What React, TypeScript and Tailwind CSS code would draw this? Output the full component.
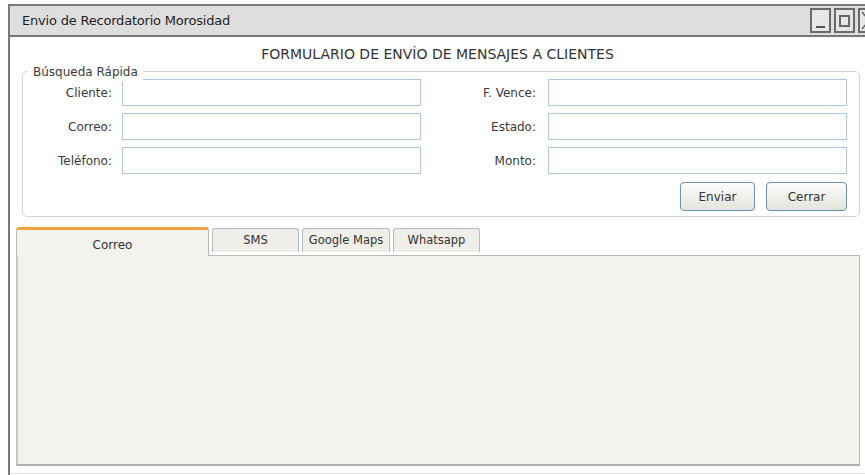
import React from "react";

const baseFont = { fontFamily: '"DejaVu Sans", "Noto Sans", sans-serif' };

function Field({ label, labelW, gap }: { label: string; labelW: string; gap: string }) {
  return (
    <div className="flex items-center">
      <div className={`${labelW} text-right text-[12px] text-[#3a3a3a]`}>{label}</div>
      <div className={`${gap} h-[27px] w-[299px] border border-[#b2c7dc] bg-white`} />
    </div>
  );
}

function WinButton({ children }: { children: React.ReactNode }) {
  return (
    <div className="flex h-[25px] w-[21px] items-center justify-center border-2 border-[#6a6a6a] bg-[#e6e6e6]">
      {children}
    </div>
  );
}

export default function App() {
  const tabs = [
    { t: "SMS", w: "w-[87px]" },
    { t: "Google Maps", w: "w-[88px]" },
    { t: "Whatsapp", w: "w-[87px]" },
  ];
  return (
    <div className="h-[475px] w-[865px] overflow-hidden bg-white pl-[8px] pt-[4px]" style={baseFont}>
      <div className="flex h-[471px] flex-col border-l-2 border-t-2 border-[#7a7a7a]">
        {/* title bar */}
        <div className="flex h-[31px] shrink-0 items-center justify-between border-b-2 border-[#777] bg-[#dedede] pl-[12px]">
          <span className="text-[13px] tracking-[-0.2px] text-[#1e1e1e]">Envio de Recordatorio Morosidad</span>
          <div className="-mr-[14px] flex gap-[3px]">
            <WinButton>
              <div className="mt-[12px] h-[2px] w-[9px] bg-[#555]" />
            </WinButton>
            <WinButton>
              <div className="h-[12px] w-[11px] border-2 border-[#666]" />
            </WinButton>
            <WinButton>
              <svg width="16" height="19" viewBox="0 0 16 19">
                <path d="M1 1 L15 18 M15 1 L1 18" stroke="#666" strokeWidth="1.5" fill="none" />
              </svg>
            </WinButton>
          </div>
        </div>

        {/* heading */}
        <div className="mt-[7px] h-[19px] text-center text-[14px] text-[#333]">
          FORMULARIO DE ENVÍO DE MENSAJES A CLIENTES
        </div>

        {/* quick search group */}
        <div className="relative ml-[12px] mr-[5px] mt-[8px] h-[146px] rounded-[5px] border border-[#d6d6ce] pt-[7px]">
          <div className="absolute -top-[9px] left-[5px] bg-white px-[5px] text-[12px] text-[#3a3a3a]">
            Búsqueda Rápida
          </div>
          <div className="flex flex-col gap-[7px]">
            <div className="flex">
              <Field label="Cliente:" labelW="w-[89px]" gap="ml-[10px]" />
              <Field label="F. Vence:" labelW="w-[115px]" gap="ml-[12px]" />
            </div>
            <div className="flex">
              <Field label="Correo:" labelW="w-[89px]" gap="ml-[10px]" />
              <Field label="Estado:" labelW="w-[115px]" gap="ml-[12px]" />
            </div>
            <div className="flex">
              <Field label="Teléfono:" labelW="w-[89px]" gap="ml-[10px]" />
              <Field label="Monto:" labelW="w-[115px]" gap="ml-[12px]" />
            </div>
          </div>
          <div className="mt-[8px] flex justify-end gap-[11px] pr-[12px]">
            <button className="h-[29px] w-[75px] rounded-[4px] border border-[#6f8fae] bg-gradient-to-b from-[#fbfbfa] to-[#e4e4de] text-[12px] text-[#333]">
              Enviar
            </button>
            <button className="h-[29px] w-[81px] rounded-[4px] border border-[#6f8fae] bg-gradient-to-b from-[#fbfbfa] to-[#e4e4de] text-[12px] text-[#333]">
              Cerrar
            </button>
          </div>
        </div>

        {/* tabs */}
        <div className="ml-[6px] mr-[5px] mt-[10px] flex flex-col">
          <div className="relative z-10 flex items-start">
            <div className="-mb-px flex h-[29px] w-[193px] items-center justify-center rounded-t-[3px] border-l border-r border-t-[3px] border-[#b9b9b4] border-t-[#f0a33c] bg-[#f3f2ed] pt-[4px] text-[12px] text-[#333]">
              Correo
            </div>
            <div className="ml-[3px] mt-[1px] flex gap-[3px]">
              {tabs.map(({ t, w }) => (
                <div
                  key={t}
                  className={`${w} flex h-[24px] items-center justify-center rounded-t-[3px] border border-b-0 border-[#adbccb] bg-[#efeee8] text-[11.5px] text-[#333]`}
                >
                  {t}
                </div>
              ))}
            </div>
          </div>
          <div className="h-[211px] border border-b-2 border-l-2 border-[#b9b9b4] border-b-[#b0b0ab] border-l-[#c6c6c0] bg-[#f3f2ed]" />
        </div>

        <div className="mt-auto h-px bg-[#e4e4e4]" />
        <div className="h-[1px]" />
      </div>
    </div>
  );
}
